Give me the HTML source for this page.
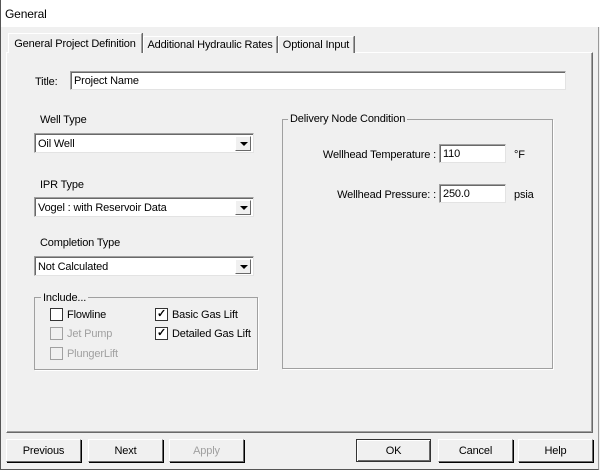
<!DOCTYPE html>
<html><head><meta charset="utf-8"><style>
*{box-sizing:border-box;margin:0;padding:0}
body{width:600px;height:470px;background:#f0f0f0;font-family:"Liberation Sans",sans-serif;font-size:11px;letter-spacing:-0.15px;color:#000;position:relative;overflow:hidden}
.a{position:absolute;white-space:nowrap}
.tb{left:0;top:0;width:600px;height:27px;background:#fff;border-left:1px solid #555}
.frame{left:0;top:27px;width:599px;height:443px;border-left:1px solid #555;border-right:1px solid #999;border-bottom:1px solid #555}
.panel{left:6px;top:52px;width:587px;height:381px;border:1px solid #a0a0a0;border-right-color:#696969;border-bottom-color:#696969;border-left-color:#fff;border-top-color:#fff;box-shadow:inset -1px -1px 0 #a0a0a0}
.tab{border:1px solid #a0a0a0;border-bottom:none;background:#f0f0f0;border-left-color:#fff;border-top-color:#fff;box-shadow:1px 0 0 #696969;text-align:center;line-height:17px;overflow:hidden}
.inp{background:#fff;border:1px solid #a0a0a0;border-right-color:#e3e3e3;border-bottom-color:#e3e3e3;box-shadow:inset 1px 1px 0 #696969;padding:0 3px;line-height:18px;height:19px}
.cb{background:#fff;border:1px solid #a0a0a0;border-right-color:#e3e3e3;border-bottom-color:#e3e3e3;box-shadow:inset 1px 1px 0 #696969;height:20px;width:220px;padding-left:3px;line-height:20px}
.cb i{position:absolute;right:2px;top:2px;width:16px;height:15px;background:#f0f0f0;border:1px solid #fff;border-right-color:#696969;border-bottom-color:#696969}
.cb i:after{content:"";position:absolute;left:4px;top:5px;border-left:4px solid transparent;border-right:4px solid transparent;border-top:4px solid #000}
.grp{border:1px solid #a0a0a0;box-shadow:1px 1px 0 #fff}
.leg{background:#f0f0f0;padding:0 2px}
.chk{width:13px;height:13px;background:#fff;border:1px solid #333;font-size:11px;line-height:11px;text-align:center;font-weight:bold}
.dis{border-color:#a0a0a0;background:#f0f0f0}
.g{color:#a0a0a0}
.btn{top:439px;height:23px;width:75px;background:#f0f0f0;border:1px solid #fff;border-right-color:#696969;border-bottom-color:#696969;box-shadow:1px 1px 0 #000;text-align:center;line-height:22px}
.t{margin-top:1px}
</style></head><body>
<div class="a tb"></div>
<div class="a" style="left:5px;top:7px;font-size:12px">General</div>
<div class="a frame"></div>
<div class="a panel"></div>
<div class="a tab" style="left:143px;top:36px;height:17px;width:134px">Additional Hydraulic Rates</div>
<div class="a tab" style="left:278px;top:36px;height:17px;width:76px">Optional Input</div>
<div class="a tab" style="left:8px;top:33px;height:20px;line-height:21px;width:134px">General Project Definition</div>

<div class="a" style="left:35px;top:76px">Title:</div>
<div class="a inp" style="left:70px;top:71px;width:496px">Project Name</div>

<div class="a" style="left:40px;top:114px">Well Type</div>
<div class="a cb" style="left:34px;top:133px">Oil Well<i></i></div>
<div class="a" style="left:40px;top:179px">IPR Type</div>
<div class="a cb" style="left:34px;top:197px">Vogel : with Reservoir Data<i></i></div>
<div class="a" style="left:40px;top:237px">Completion Type</div>
<div class="a cb" style="left:34px;top:256px">Not Calculated<i></i></div>

<div class="a grp" style="left:34px;top:297px;width:224px;height:73px"></div>
<div class="a leg" style="left:41px;top:292px">Include...</div>
<div class="a chk" style="left:50px;top:308px"></div><div class="a" style="left:67px;top:309px">Flowline</div>
<div class="a chk dis" style="left:50px;top:327px"></div><div class="a g" style="left:67px;top:328px">Jet Pump</div>
<div class="a chk dis" style="left:50px;top:347px"></div><div class="a g" style="left:67px;top:348px">PlungerLift</div>
<div class="a chk" style="left:155px;top:308px">✓</div><div class="a" style="left:172px;top:309px">Basic Gas Lift</div>
<div class="a chk" style="left:155px;top:327px">✓</div><div class="a" style="left:172px;top:328px">Detailed Gas Lift</div>

<div class="a grp" style="left:282px;top:119px;width:271px;height:250px"></div>
<div class="a leg" style="left:288px;top:113px">Delivery Node Condition</div>
<div class="a" style="left:256px;top:149px;width:180px;text-align:right">Wellhead Temperature :</div>
<div class="a inp" style="left:439px;top:144px;width:67px">110</div>
<div class="a" style="left:514px;top:149px">°F</div>
<div class="a" style="left:256px;top:189px;width:180px;text-align:right">Wellhead Pressure: :</div>
<div class="a inp" style="left:439px;top:184px;width:67px">250.0</div>
<div class="a" style="left:514px;top:189px">psia</div>

<div class="a btn" style="left:6px">Previous</div>
<div class="a btn" style="left:88px">Next</div>
<div class="a btn g" style="left:169px">Apply</div>
<div class="a btn" style="left:356px;border:1px solid #333;box-shadow:inset 1px 1px 0 #fff,inset -1px -1px 0 #696969">OK</div>
<div class="a btn" style="left:438px">Cancel</div>
<div class="a btn" style="left:518px">Help</div>
</body></html>
